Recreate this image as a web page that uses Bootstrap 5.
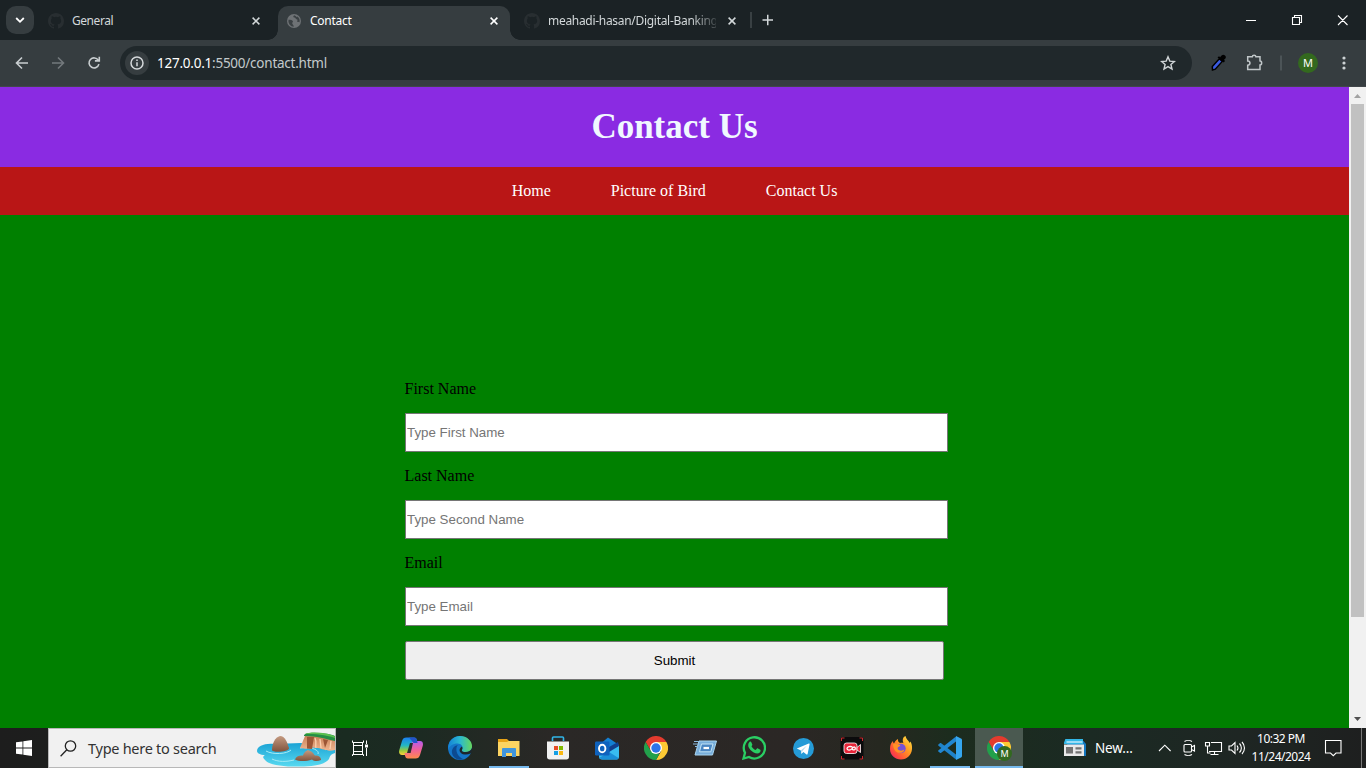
<!DOCTYPE html>
<html lang="en">
<head>
<meta charset="utf-8">
<meta name="viewport" content="width=device-width, initial-scale=1">
<title>Contact</title>
<link href="https://cdn.jsdelivr.net/npm/bootstrap@5.3.0/dist/css/bootstrap.min.css" rel="stylesheet">
<style>
body{width:1366px;height:768px;overflow:hidden;font-family:"Noto Sans","Open Sans",sans-serif;font-size:12px;line-height:1.2;background:#363d40}
svg{display:block;flex:none}
.strip{height:40px;background:#1b2225;color:#d3d8da}
.chev{width:28px;height:28px;border-radius:10px;background:#363d40;margin:6px 8px 0 6px}
.tab{height:40px;width:236px;padding:1px 18px 0 6px}
.tab-on{height:34px;width:232px;margin-top:6px;background:#363d40;border-radius:10px 10px 0 0;padding:0 8px 5px 8px}
.tab-on:before,.tab-on:after{content:"";position:absolute;bottom:0;width:10px;height:10px}
.tab-on:before{left:-10px;background:radial-gradient(circle at 0 0,transparent 9.5px,#363d40 10px)}
.tab-on:after{right:-10px;background:radial-gradient(circle at 100% 0,transparent 9.5px,#363d40 10px)}
.tab-name{font-size:12px;letter-spacing:-.45px;line-height:18px;white-space:nowrap}
.fade-end{width:168px;letter-spacing:-.3px;-webkit-mask-image:linear-gradient(90deg,#000 85%,transparent 103%);mask-image:linear-gradient(90deg,#000 85%,transparent 103%)}
.tab-rule{left:750px;top:12px}
.tools{height:47px;background:#363d40;padding-bottom:1px;border-bottom:1px solid #41474a}
.omni{width:1072px;height:34px;border-radius:17px;background:#20282b;color:#c3cacc;padding:0 16px 0 5px}
.info{width:24px;height:24px;background:#363d40}
.addr{font-size:13.5px;letter-spacing:-.24px;padding-top:1px}
.addr b{font-weight:400;color:#fff}
.me{width:20px;height:20px;background:#33691e;color:#fff;font-size:11px}
.site{width:1349px;background:#008000;font-family:"Liberation Serif",serif;font-size:16px;color:#000}
.banner{height:80px;background:#8a2be2;color:#f0f8ff}
.banner h1{font-size:35px;font-weight:700;line-height:40px}
.menu{height:48px;background:#b91616;gap:60px}
.menu a{color:#fff;text-decoration:none}
.contact{width:543px;margin:165px 0 0 405px}
.contact label{height:18px;line-height:18px;margin-bottom:15px;margin-left:-.5px}
.field{height:39px;width:543px;border:1px solid #767676;border-radius:0;padding:0 1px;font:13.333px "Liberation Sans",sans-serif;background:#fff;margin-bottom:15px}
.field::placeholder{color:#757575;opacity:1}
.send{height:39px;width:539px;border:1px solid #767676;border-radius:2px;background:#efefef;font:13.333px "Liberation Sans",sans-serif;color:#000}
.scroll{width:17px;background:#f1f1f1}
.thumb{width:13px;height:513px;background:#c1c1c1}
.taskbar{height:40px;color:#fff;background:linear-gradient(90deg,#1d1d1d 0,#1d1e1d 50px,#1a2b21 345px,#1c2a22 420px,#2a2826 550px,#2b2725 790px,#262820 880px,#1c2c1e 950px,#1b2a23 1090px,#1e2623 1240px,#1e1f1f 1366px)}
.taskbar>*{flex:none}
.start{width:48px}
.find{width:288px;height:40px;background:#f1f1f1;border:1px solid #b8b8b8;color:#333;font-size:14.5px;padding-left:11px}
.find span{margin-left:11px;letter-spacing:-.27px;padding-top:1px}
.apps{gap:1px;margin-left:3px}
.app{width:48px;height:40px}
.run:after{content:"";position:absolute;left:4px;right:4px;bottom:0;height:2px;background:#76b9ed}
.live{background:#4a5950}
.live:after{left:0;right:0}
.news{font-size:13.5px;letter-spacing:-.15px;width:56px;margin-left:9px}
.clock{font-size:12px;line-height:18px;letter-spacing:-.5px;width:62px;white-space:nowrap}
</style>
<script src="https://cdn.jsdelivr.net/npm/bootstrap@5.3.0/dist/js/bootstrap.bundle.min.js"></script>
</head>
<body class="d-flex flex-column m-0">
<svg width="0" height="0" class="position-absolute">
<defs>
<linearGradient id="sea" x2="0" y2="1"><stop stop-color="#1ba3d5"/><stop offset="1" stop-color="#58d9f0"/></linearGradient>
<linearGradient id="rock" x2="0" y2="1"><stop stop-color="#c49a80"/><stop offset="1" stop-color="#80533d"/></linearGradient>
<linearGradient id="cliff" x2="0" y2="1"><stop stop-color="#c98258"/><stop offset="1" stop-color="#f0b58f"/></linearGradient>
<linearGradient id="edge1" x1="1" x2="0"><stop stop-color="#67d75c"/><stop offset=".5" stop-color="#2bb9cf"/><stop offset="1" stop-color="#1482d8"/></linearGradient>
<linearGradient id="cpA" x2="0" y2="1"><stop stop-color="#1a7ff0"/><stop offset=".45" stop-color="#23b6c4"/><stop offset=".75" stop-color="#9acb3c"/><stop offset="1" stop-color="#ffd23b"/></linearGradient>
<linearGradient id="cpB" x2="0" y2="1"><stop stop-color="#b45cf0"/><stop offset=".5" stop-color="#f0609a"/><stop offset="1" stop-color="#ff8a4a"/></linearGradient>
<linearGradient id="fox" x1="1" x2="0" y2="1"><stop stop-color="#fff04a"/><stop offset=".4" stop-color="#ff9a22"/><stop offset=".75" stop-color="#ff4a3c"/><stop offset="1" stop-color="#e8177a"/></linearGradient>
<symbol id="x" viewBox="0 0 8 8"><path d="M.6.6l6.8 6.8M7.4.6L.6 7.4" stroke="currentColor" stroke-width="1.5"/></symbol>
<symbol id="cat" viewBox="0 0 16 16"><path fill="#282e31" d="M8 0C3.58 0 0 3.58 0 8c0 3.54 2.29 6.53 5.47 7.59.4.07.55-.17.55-.38v-1.49c-2.01.37-2.53-.49-2.69-.94-.09-.23-.48-.94-.82-1.13-.28-.15-.68-.52-.01-.53.63-.01 1.08.58 1.23.82.72 1.21 1.87.87 2.33.66.07-.52.28-.87.51-1.07-1.78-.2-3.64-.89-3.64-3.95 0-.87.31-1.59.82-2.15-.08-.2-.36-1.02.08-2.12 0 0 .67-.21 2.2.82a7.4 7.4 0 0 1 4 0c1.53-1.04 2.2-.82 2.2-.82.44 1.1.16 1.92.08 2.12.51.56.82 1.27.82 2.15 0 3.07-1.87 3.75-3.65 3.95.29.25.54.73.54 1.48v2.2c0 .21.15.46.55.38A8 8 0 0 0 16 8c0-4.42-3.58-8-8-8z"/></symbol>
<symbol id="chrome" viewBox="0 0 24 24"><path fill="#e33b2e" d="M1.6 6A12 12 0 0 1 22.4 6H12z"/><path fill="#e33b2e" d="M1.6 6L7 15l5-9z"/><path fill="#fcc934" d="M22.4 6A12 12 0 0 1 12 24l5.2-9L12 6z"/><path fill="#22a04b" d="M12 24A12 12 0 0 1 1.6 6l5.2 9 5.2 2.8 3.5-.3z"/><circle cx="12" cy="12" r="6" fill="#fff"/><circle cx="12" cy="12" r="4.7" fill="#2c74e8"/></symbol>
</defs></svg>

<header class="strip d-flex flex-shrink-0">
<div class="chev d-flex align-items-center justify-content-center"><svg width="10" height="8" viewBox="0 0 10 8" fill="none" stroke="#fff" stroke-width="1.8"><path d="M1.2 2L5 5.8 8.8 2"/></svg></div>
<div class="tab d-flex align-items-center"><svg width="16" height="16"><use href="#cat"/></svg><span class="tab-name ms-2">General</span><svg class="ms-auto" width="8" height="8"><use href="#x"/></svg></div>
<div class="tab-on position-relative d-flex align-items-center"><svg width="16" height="16" viewBox="0 0 16 16"><circle cx="8" cy="8" r="7" fill="#6e7275"/><path fill="#3b4144" d="M2.500 6.700c2 .1 4 .3 4.400 1.600.3 1.200-.8 1-.7 2 .1 1.300 1.500 1.300 1.600 3.400A5.700 5.700 0 0 1 2.500 6.700zM8.200 2.200c-1.200.7-1.300 2.300.3 2.400 1.200.1.9 1.400 1.900 1.600 1.500.3 1.400 1.300.6 1.900.3 1.300 1.600.7 2.500 1.100A5.700 5.700 0 0 0 11.500 3.500c-.4.700-1.300.5-1.500-.2z"/></svg><span class="tab-name ms-2 text-white" style="letter-spacing:-.25px">Contact</span><svg class="ms-auto text-white me-1" width="8" height="8"><use href="#x"/></svg></div>
<div class="tab d-flex align-items-center ms-2"><svg width="16" height="16"><use href="#cat"/></svg><span class="tab-name fade-end ms-2">meahadi-hasan/Digital-Banking</span><svg class="ms-auto" width="8" height="8"><use href="#x"/></svg></div>
<svg width="30" height="40" viewBox="0 0 30 40"><path d="M8.500 20H19M13.750 14.750v10.500" stroke="#d3d8da" stroke-width="1.500"/></svg>
<svg class="tab-rule position-absolute" width="2" height="16"><path d="M1 0v16" stroke="#394043" stroke-width="2"/></svg>
<svg class="ms-auto" width="126" height="40" viewBox="0 0 126 40" fill="none" stroke="#fff"><path d="M6 20.500h10M52.500 17.500h7v7h-7zM54.500 17v-1.500h7v7H60M98 15.500l9.500 9.500M107.500 15.500L98 25" stroke-width="1.100"/></svg>
</header>

<div class="tools d-flex align-items-center flex-shrink-0">
<svg width="120" height="34" viewBox="0 0 120 34" fill="none" stroke="#c9ced0" stroke-width="1.600"><path d="M28 17H17M22 11.500L16.500 17l5.500 5.500"/><path d="M52 17h11M58 11.500l5.500 5.500-5.500 5.500" stroke="#73797c"/><path d="M98.300 14.300a5 5 0 1 0 .6 3.800M99.300 10.700v4.200h-4.400"/></svg>
<div class="omni d-flex align-items-center"><span class="info rounded-circle d-flex align-items-center justify-content-center"><svg width="14" height="14" viewBox="0 0 14 14" fill="none" stroke="#d5d9db" stroke-width="1.500"><circle cx="7" cy="7" r="6"/><path d="M7 6.300v4M7 3.500v1.500"/></svg></span><span class="addr ms-2"><b>127.0.0.1</b>:5500/contact.html</span>
<svg class="ms-auto" width="16" height="16" viewBox="0 0 16 16" fill="none" stroke="#d0d5d7" stroke-width="1.400"><path d="M8 1.800l1.800 4.300 4.600.4-3.500 3 1.100 4.500L8 11.600 4 14l1.100-4.500-3.500-3 4.600-.4z"/></svg></div>
<svg width="106" height="34" viewBox="0 0 106 34"><path d="M20.500 24l-.2-3.600 7-7.700 3 2.700-7 7.800z" fill="#3b5be0" stroke="#000" stroke-width="1.500"/><path d="M25.500 11.500l1.500-1.300 1.200 1c1.200-2.200 2.800-3.200 4.500-2 1.900 1.400 1.400 3-.7 4.600l1 1.200-1.300 1.500z" fill="#000"/><path d="M56 10.800h4.300c.1-2.200 3.500-2.200 3.600 0h4.100v4.100c2.200.1 2.200 4 0 4.100v4.500H55.700v-4.300c3-.1 3-4.100 0-4.200v-4.200z" fill="none" stroke="#c0c6c8" stroke-width="1.500"/><path d="M89 9.500v15" stroke="#555c5f" stroke-width="1.500"/></svg>
<span class="me rounded-circle d-flex align-items-center justify-content-center">M</span>
<svg width="48" height="34" viewBox="0 0 48 34" fill="#cdd2d4"><circle cx="26" cy="12" r="1.600"/><circle cx="26" cy="17" r="1.600"/><circle cx="26" cy="22" r="1.600"/></svg>
</div>

<div class="d-flex flex-grow-1" style="min-height:0">
<main class="site">
<div class="banner d-flex align-items-center justify-content-center"><h1 class="m-0">Contact Us</h1></div>
<nav class="menu d-flex align-items-center justify-content-center"><a href="#">Home</a><a href="#">Picture of Bird</a><a href="#">Contact Us</a></nav>
<form class="contact d-flex flex-column">
<label for="f1">First Name</label><input class="field" id="f1" placeholder="Type First Name">
<label for="f2">Last Name</label><input class="field" id="f2" placeholder="Type Second Name">
<label for="f3">Email</label><input class="field" id="f3" placeholder="Type Email">
<button type="button" class="send">Submit</button>
</form>
</main>
<aside class="scroll d-flex flex-column align-items-center">
<svg width="17" height="17" viewBox="0 0 17 17"><path d="M5 11l3.500-4 3.500 4z" fill="#a3a3a3"/></svg>
<div class="thumb"></div>
<svg class="mt-auto" width="17" height="17" viewBox="0 0 17 17"><path d="M5 6l3.500 4L12 6z" fill="#505050"/></svg>
</aside>
</div>

<footer class="taskbar d-flex align-items-center flex-shrink-0">
<div class="start d-flex justify-content-center"><svg width="16" height="16" viewBox="0 0 16 16" fill="#fff"><path d="M0 2.300L6.500 1.400v6.200H0zM7.300 1.300L16 0v7.600H7.300zM0 8.400h6.500v6.200L0 13.700zM7.300 8.400H16V16l-8.700-1.300z"/></svg></div>
<div class="find d-flex align-items-center"><svg width="17" height="17" viewBox="0 0 17 17" fill="none" stroke="#222" stroke-width="1.300"><circle cx="10.500" cy="6" r="5.200"/><path d="M6.800 9.800L.6 16.200"/></svg><span>Type here to search</span>
<svg class="ms-auto" width="78" height="38" viewBox="0 0 78 38"><path fill="url(#sea)" d="M0 22c0-5 8-8 17-7l27-1 34 7v3c-4 1-5 3-6 6-3 4-10 7-25 7.500-16 .5-32-.5-38-5.500-3-3-4-4-1-6-5 0-8-2-8-4z"/><path d="M9 22c7 4 21 3 25-1M15 30c6 3 14 3 22 1M43 19c10-2 20 2 18 6" fill="none" stroke="#a5ecf6" stroke-width="1"/><path d="M43 19l5-12h13l17 4v10c-4 1-8 1-11-.5-3 0-4-2-7-1.500l-5-.5c-3 1.500-6 1.500-12 .5z" fill="url(#cliff)"/><path d="M50 8h7l-2 12-5-.5zM66 10l2 9 3-8zM47 12l-2 6" fill="#9d5635"/><path d="M58 9c2 4 0 8 1 10M63 10l1 9M74 12l-1 8" fill="none" stroke="#fbd0ae" stroke-width="1.300"/><path d="M47 6c2-2 6-2.500 13-2 7 0 14 1 18 3v5C69 10 60 7 47 7z" fill="#258e45"/><path d="M48 5c4-2.500 22-2 30 2.500v1.500C68 5.500 59 5 48 5z" fill="#5cc04f"/><path d="M15 21c0-6 3-13 8-14 5 0 7 6 9 12 1 4-17 5-17 2z" fill="url(#rock)"/><path d="M38 30.500c1-3 4-4.500 8-4 1-3 4-6 6-5 4 1 4 3 6 5 4-.5 6 2 6 4.500-4 2-7 1-9-.5-6 2-13 2-17 0z" fill="url(#rock)"/></svg></div>
<div class="app d-flex align-items-center justify-content-center"><svg width="18" height="16" viewBox="0 0 18 16" fill="none" stroke="#fff" stroke-width="1"><path d="M2.500 5.500h9v6h-9zM1.500 .5v2h11v-2M1.500 16v-1.500h11V16M2.500 2.500v12M11.500 2.500v12M15.500 .5v3.500M15.500 8v8"/><path d="M14 4.500h3v3h-3z" fill="#fff" stroke="none"/></svg></div>
<div class="apps d-flex">
<div class="app d-flex align-items-center justify-content-center"><svg width="24" height="22" viewBox="0 0 24 22"><path fill="url(#cpA)" d="M7.500.5H15c2 0 2.500 1 3 3l.6 2.500H17c-2 0-3 1-3.500 3l-2 6.500c-.6 2-1.800 2.500-3 2.500H3c-2.500 0-3.500-2-2.700-5L3 4C3.800 1.500 5 .5 7.500.5z"/><path fill="url(#cpB)" d="M16.500 21.500H9c-2 0-2.500-1-3-3L5.500 16H7c2 0 3-1 3.500-3l2-6.500c.6-2 1.800-2.500 3-2.500H21c2.500 0 3.500 2 2.700 5L21 18c-.8 2.500-2 3.500-4.500 3.500z"/><path d="M14 6h-3L8 16h3.600z" fill="#26302c"/><path d="M10 .5h5c2 0 2.500 1 3 3l.6 2.500h-4z" fill="#2453c8"/></svg></div>
<div class="app d-flex align-items-center justify-content-center"><svg width="24" height="24" viewBox="0 0 24 24"><circle cx="12" cy="12" r="12" fill="#1475c8"/><path fill="url(#edge1)" d="M.2 11C1 4 6 0 12 0c7 0 12 5 12 10 0 4-3 6-6.500 6-3 0-4.500-1-3.500-2.500 2-3-1-6-4.500-6C5 7.500 1 10 .2 14z"/><path fill="#0c4a91" d="M9 10c-2 5 1 11 6 13-5 2-10-1-11-6-.6-3 1-7 6-8z"/><path fill="#1d272b" d="M13.800 10.500c1 1.300.8 2.300.2 3.200-.6 1.400.8 2.300 3.500 2.300 3 0 5.500-1.500 6.500-4v4.500l-1.500 1c-2 1-4 1.300-6 1-4.500-.5-7-5-2.700-8z"/></svg></div>
<div class="app run position-relative d-flex align-items-center justify-content-center"><svg width="22" height="20" viewBox="0 0 22 20"><path fill="#e8a317" d="M0 1h9l2 2h10v6H0z"/><path fill="#fcd462" d="M0 4h9l1.500-1H21.500v15H0z"/><path fill="#4095dc" d="M4 19v-8c0-.5.500-1 1-1h12c.6 0 1 .5 1 1v8h-4v-4H8v4z"/></svg></div>
<div class="app d-flex align-items-center justify-content-center"><svg width="24" height="24" viewBox="0 0 24 24"><path d="M6.500 5V2c0-.6.500-1 1-1h9c.6 0 1 .4 1 1v3" fill="none" stroke="#31b5e8" stroke-width="1.600"/><path fill="#f1f1f1" d="M1 5.500h22v15.500c0 1.500-1 2.500-2.500 2.500h-17C2 23.500 1 22.500 1 21z"/><path fill="#e74c25" d="M8 10h4v4H8z"/><path fill="#7fba00" d="M13 10h4v4h-4z"/><path fill="#159fe5" d="M8 15h4v4H8z"/><path fill="#fbb912" d="M13 15h4v4h-4z"/></svg></div>
<div class="app d-flex align-items-center justify-content-center"><svg width="25" height="23" viewBox="0 0 25 23"><path fill="#1480d2" d="M4 8l9-7.500L24 8v5H4z"/><path fill="#38bdf0" d="M4 10h18l2-2v12c0 1.500-1 2.500-2.500 2.500H7c-2 0-3-1-3-3z"/><path fill="#113f8d" d="M14 10L23 5l1 4-10 6z"/><path fill="#1a8fd8" d="M4 21l10-6 9.500 6c-.5 1-1 1.500-2 1.500H7z"/><rect y="4.500" width="14.500" height="14" rx="1.200" fill="#0f62bd"/><ellipse cx="7.200" cy="11.500" rx="3.200" ry="3.800" fill="none" stroke="#fff" stroke-width="1.900"/></svg></div>
<div class="app d-flex align-items-center justify-content-center"><svg width="24" height="24"><use href="#chrome"/></svg></div>
<div class="app d-flex align-items-center justify-content-center"><svg width="25" height="18" viewBox="0 0 25 18"><path d="M6 2h17.500l-4 14H2z" fill="#78aedb" stroke="#a8d4ef"/><path d="M8.500 5H20l-2.200 7.800H6.500z" fill="#4a86c2" stroke="#c4e4f6"/><path d="M10.500 9h5.500" stroke="#fff" stroke-width="2.200"/><path d="M1 2.500h5M0 5h5M2 7.500h3" stroke="#8abbe0"/></svg></div>
<div class="app d-flex align-items-center justify-content-center"><svg width="24" height="24" viewBox="0 0 24 24"><path d="M1.500 22.500l1.500-5.700A10.600 10.600 0 1 1 7 21z" fill="none" stroke="#2ace63" stroke-width="2.300"/><path fill="#2ace63" d="M7.500 6c.7-.6 1.500-.5 1.800.2l1 2.200c.2.600-.2 1-.8 1.800 1 1.900 2.300 3 4.200 3.800l1.300-1.500c.3-.4.700-.3 1 0l2.300 1.200c.5.300.2 1.900-.3 2.600-1.600 1.800-4 1.200-6.300.1-2.400-1.200-4.500-3.600-5.300-5.700C6 9 6.300 7 7.500 6z"/></svg></div>
<div class="app d-flex align-items-center justify-content-center"><svg width="21" height="21" viewBox="0 0 21 21"><circle cx="10.500" cy="10.500" r="10.500" fill="#259bd7"/><path fill="#fff" d="M3.800 10.500l12-5c.6-.2 1 .1.800.8l-2 9.600c-.2.700-.6.800-1.100.5l-3.100-2.300-1.600 1.500c-.3.300-.6.100-.6-.2l-.3-3z"/><path d="M8 12.300l6-4.800-4.500 5.500-1 2.300z" fill="#b6d9ea"/></svg></div>
<div class="app d-flex align-items-center justify-content-center"><svg width="24" height="24" viewBox="0 0 24 24"><rect x=".5" y="1" width="23" height="22.500" rx="3" fill="#0b0b0c"/><path d="M1.500 5V2h3M19.500 2h3v3M1.500 20v3h3M19.500 23h3v-3" fill="none" stroke="#cf282e" stroke-width="1"/><rect x="4" y="7" width="13" height="10.500" rx="2.500" fill="#e72439" stroke="#fff" stroke-width=".8"/><path d="M17 11.500l3.500-3v8L17 14z" fill="#e72439" stroke="#fff" stroke-width=".8"/><path d="M12.500 11c-2-1-5.500-.5-5.500 1.500s3.500 2 4.800.4c1-1.800 3.200-2.800 3.500-.7.300 2.300-2 2-3 1" fill="none" stroke="#fff" stroke-width="1.300"/></svg></div>
<div class="app d-flex align-items-center justify-content-center"><svg width="24" height="24" viewBox="0 0 24 24"><path fill="url(#fox)" d="M1 13c0-4 1-6 3-8 0 1 .2 1.800 1 2.500C6.500 4.500 8 3.500 9 3c-.3 2 .5 3 2 4 2-.3 2.500-.2 3.500.2C13 4 14 1 16.500 0c.5 3 3 4.500 4.300 7l.7-1.500c1 2 1.800 4 1.500 7.500-.5 6-5 10.500-11 10.500S1 19 1 13z"/><circle cx="12" cy="12.500" r="4.700" fill="#7551d5"/><path d="M4 8c3-1 4 1 6.500.8 1.300.2 1 1.400-.8 2-2 1-1 3.500 1.600 3.800 2.200.2 3-.8 4-1.200-.5 4-6 4.600-9 1.500C4.800 13 4 10.500 4 8z" fill="#ff9125"/></svg></div>
<div class="app run position-relative d-flex align-items-center justify-content-center"><svg width="24" height="24" viewBox="0 0 24 24"><path fill="#1f83c9" d="M.4 8.500l1.500-1.300c.5-.4.900-.3 1.300 0L18 18.500v5L.5 9.700c-.5-.4-.4-.9-.1-1.200z"/><path fill="#2187d2" d="M.4 15.500l1.500 1.300c.5.400.9.300 1.300 0L18 5.500v-5L.5 14.300c-.5.400-.4.900-.1 1.200z"/><path fill="#35a6ee" d="M18 0l5 2.600c.6.300 1 .8 1 1.500v15.800c0 .7-.4 1.200-1 1.500L18 24z"/></svg></div>
<div class="app run live position-relative d-flex align-items-center justify-content-center"><svg width="26" height="26" viewBox="0 0 26 26"><svg x="1" y="1" width="24" height="24"><use href="#chrome"/></svg><circle cx="18.500" cy="18.500" r="7.500" fill="#32691f"/><text x="18.500" y="22" fill="#fff" font-size="9" text-anchor="middle" font-family="Noto Sans, sans-serif">M</text></svg></div>
</div>
<div class="d-flex align-items-center" style="margin-left:41px">
<svg width="22" height="18" viewBox="0 0 22 18"><path fill="#1476be" d="M3 2h16.500l2.500 3v12H4z"/><path fill="#32b7e7" d="M1 1c0-.6.500-1 1-1h17v5H0V3.500z"/><path d="M2.500 3h16" stroke="#e5f7ff" stroke-width="1.200"/><path fill="#e9e9e9" d="M0 5.500h20V17H0z"/><path fill="#737373" d="M2 8h7v6.500H2zM11.500 8.300h6v2.200h-6zM11.500 12.300h6v2.200h-6z"/></svg>
<span class="news">New...</span>
<svg width="102" height="40" viewBox="0 0 102 40" fill="none" stroke="#fff" stroke-width="1.100"><path d="M8 23l5.800-5.800 5.800 5.800M34 16.500h5.500c.6 0 1 .4 1 1v5.500c0 .6-.4 1-1 1H34c-.6 0-1-.4-1-1v-5.500c0-.6.400-1 1-1zM40.500 19l3-1.500v5.500l-3-1.500M33.500 13.500c2-1.300 5.500-1.300 7.500 0M33.500 26.500c2 1.300 5.500 1.300 7.500 0M60 14.500h10.500v9H58M63.500 23.500v3M59.500 26.500h8M54.500 14.500h4v3.500h-4zM56.500 18v7h3M78 18h2.500l3.500-3.500v11L80.500 22H78zM86 17.500c1.200 1.500 1.200 3.500 0 5M88.500 15.500c2.500 2.500 2.500 6.500 0 9M91 14c3.300 3.500 3.300 8.500 0 12"/></svg>
</div>
<div class="clock text-center" style="margin-left:-3px">10:32 PM<br>11/24/2024</div>
<svg width="55" height="40" viewBox="0 0 55 40" fill="none" stroke="#fff" stroke-width="1.100"><path d="M13.500 12.500h15.500v12.500h-5l-2.700 2.700L18.500 25h-5z"/><path d="M49.500 0v40" stroke="#777" stroke-width="1"/></svg>
</footer>
</body>
</html>
